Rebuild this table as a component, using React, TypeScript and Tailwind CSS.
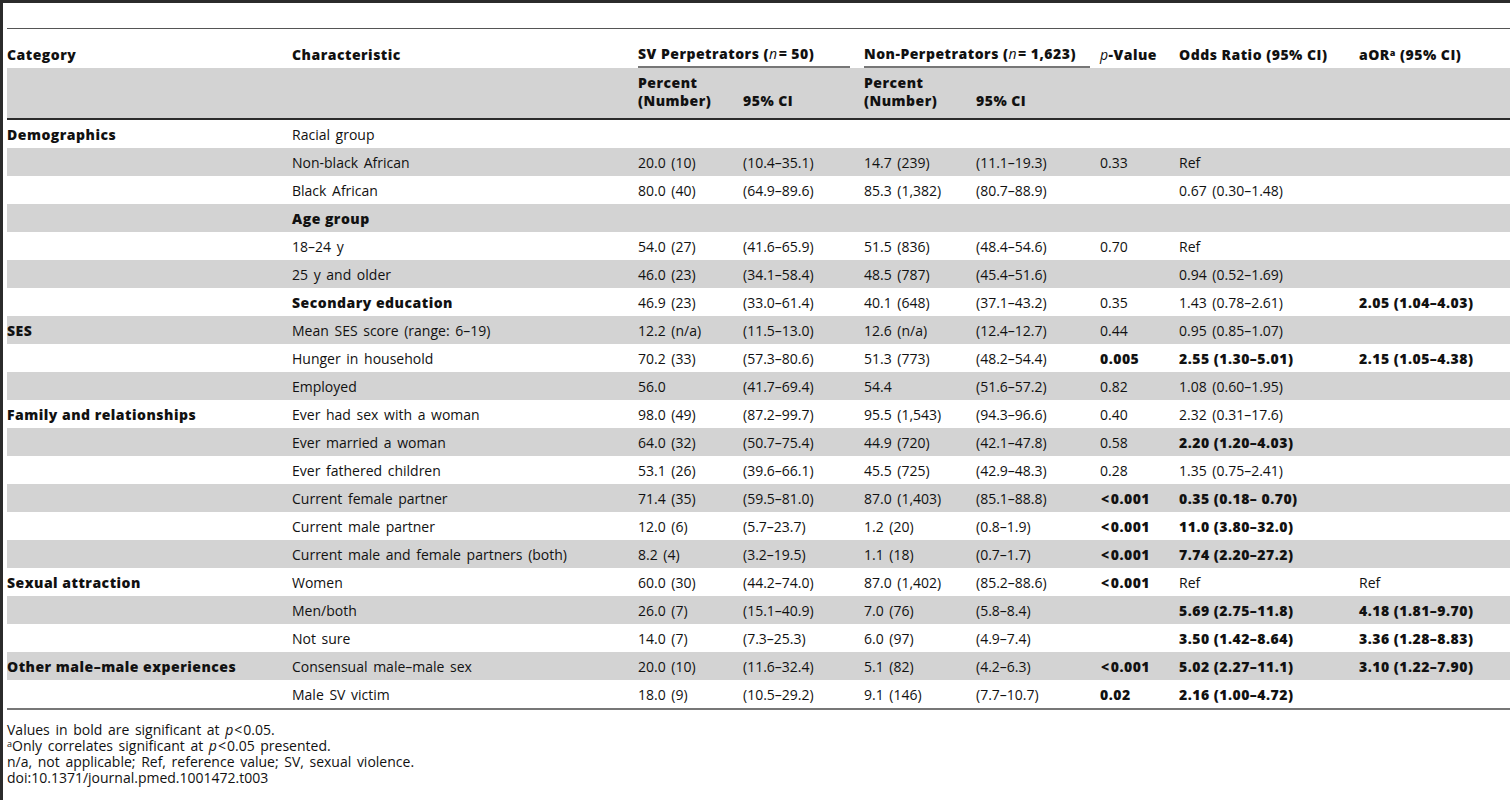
import React from 'react';

type Row = {
  cat?: string;
  ch: string;
  chBold?: boolean;
  svPct?: string;
  svCi?: string;
  npPct?: string;
  npCi?: string;
  p?: string;
  pBold?: boolean;
  or?: string;
  orBold?: boolean;
  aor?: string;
  aorBold?: boolean;
};

const rows: Row[] = [
  { cat: 'Demographics', ch: 'Racial group' },
  { ch: 'Non-black African', svPct: '20.0 (10)', svCi: '(10.4–35.1)', npPct: '14.7 (239)', npCi: '(11.1–19.3)', p: '0.33', or: 'Ref' },
  { ch: 'Black African', svPct: '80.0 (40)', svCi: '(64.9–89.6)', npPct: '85.3 (1,382)', npCi: '(80.7–88.9)', or: '0.67 (0.30–1.48)' },
  { ch: 'Age group', chBold: true },
  { ch: '18–24 y', svPct: '54.0 (27)', svCi: '(41.6–65.9)', npPct: '51.5 (836)', npCi: '(48.4–54.6)', p: '0.70', or: 'Ref' },
  { ch: '25 y and older', svPct: '46.0 (23)', svCi: '(34.1–58.4)', npPct: '48.5 (787)', npCi: '(45.4–51.6)', or: '0.94 (0.52–1.69)' },
  { ch: 'Secondary education', chBold: true, svPct: '46.9 (23)', svCi: '(33.0–61.4)', npPct: '40.1 (648)', npCi: '(37.1–43.2)', p: '0.35', or: '1.43 (0.78–2.61)', aor: '2.05 (1.04–4.03)', aorBold: true },
  { cat: 'SES', ch: 'Mean SES score (range: 6–19)', svPct: '12.2 (n/a)', svCi: '(11.5–13.0)', npPct: '12.6 (n/a)', npCi: '(12.4–12.7)', p: '0.44', or: '0.95 (0.85–1.07)' },
  { ch: 'Hunger in household', svPct: '70.2 (33)', svCi: '(57.3–80.6)', npPct: '51.3 (773)', npCi: '(48.2–54.4)', p: '0.005', pBold: true, or: '2.55 (1.30–5.01)', orBold: true, aor: '2.15 (1.05–4.38)', aorBold: true },
  { ch: 'Employed', svPct: '56.0', svCi: '(41.7–69.4)', npPct: '54.4', npCi: '(51.6–57.2)', p: '0.82', or: '1.08 (0.60–1.95)' },
  { cat: 'Family and relationships', ch: 'Ever had sex with a woman', svPct: '98.0 (49)', svCi: '(87.2–99.7)', npPct: '95.5 (1,543)', npCi: '(94.3–96.6)', p: '0.40', or: '2.32 (0.31–17.6)' },
  { ch: 'Ever married a woman', svPct: '64.0 (32)', svCi: '(50.7–75.4)', npPct: '44.9 (720)', npCi: '(42.1–47.8)', p: '0.58', or: '2.20 (1.20–4.03)', orBold: true },
  { ch: 'Ever fathered children', svPct: '53.1 (26)', svCi: '(39.6–66.1)', npPct: '45.5 (725)', npCi: '(42.9–48.3)', p: '0.28', or: '1.35 (0.75–2.41)' },
  { ch: 'Current female partner', svPct: '71.4 (35)', svCi: '(59.5–81.0)', npPct: '87.0 (1,403)', npCi: '(85.1–88.8)', p: '<0.001', pBold: true, or: '0.35 (0.18– 0.70)', orBold: true },
  { ch: 'Current male partner', svPct: '12.0 (6)', svCi: '(5.7–23.7)', npPct: '1.2 (20)', npCi: '(0.8–1.9)', p: '<0.001', pBold: true, or: '11.0 (3.80–32.0)', orBold: true },
  { ch: 'Current male and female partners (both)', svPct: '8.2 (4)', svCi: '(3.2–19.5)', npPct: '1.1 (18)', npCi: '(0.7–1.7)', p: '<0.001', pBold: true, or: '7.74 (2.20–27.2)', orBold: true },
  { cat: 'Sexual attraction', ch: 'Women', svPct: '60.0 (30)', svCi: '(44.2–74.0)', npPct: '87.0 (1,402)', npCi: '(85.2–88.6)', p: '<0.001', pBold: true, or: 'Ref', aor: 'Ref' },
  { ch: 'Men/both', svPct: '26.0 (7)', svCi: '(15.1–40.9)', npPct: '7.0 (76)', npCi: '(5.8–8.4)', or: '5.69 (2.75–11.8)', orBold: true, aor: '4.18 (1.81–9.70)', aorBold: true },
  { ch: 'Not sure', svPct: '14.0 (7)', svCi: '(7.3–25.3)', npPct: '6.0 (97)', npCi: '(4.9–7.4)', or: '3.50 (1.42–8.64)', orBold: true, aor: '3.36 (1.28–8.83)', aorBold: true },
  { cat: 'Other male–male experiences', ch: 'Consensual male–male sex', svPct: '20.0 (10)', svCi: '(11.6–32.4)', npPct: '5.1 (82)', npCi: '(4.2–6.3)', p: '<0.001', pBold: true, or: '5.02 (2.27–11.1)', orBold: true, aor: '3.10 (1.22–7.90)', aorBold: true },
  { ch: 'Male SV victim', svPct: '18.0 (9)', svCi: '(10.5–29.2)', npPct: '9.1 (146)', npCi: '(7.7–10.7)', p: '0.02', pBold: true, or: '2.16 (1.00–4.72)', orBold: true },
];

const cols = 'grid grid-cols-[285px_346px_105px_121px_112px_124px_79px_180px_151px]';
const bold = 'font-extrabold tracking-[0.035em] [word-spacing:0px]';

// wider "<" like the typeset original
const Lt: React.FC = () => <span className="mx-[1px]">&lt;</span>;

const withLt = (s?: string) =>
  s && s.startsWith('<') ? (
    <>
      <Lt />
      {s.slice(1)}
    </>
  ) : (
    s
  );

const App: React.FC = () => {
  return (
    <div
      className="min-h-[800px] w-[1510px] border-l-[3px] border-t-[3px] border-[#2b2b2b] bg-white pl-[4px] text-[14px] text-[#111] [word-spacing:2px]"
      style={{ fontFamily: '"Open Sans", "Noto Sans", Arial, sans-serif' }}
    >
      {/* blank title band */}
      <div className="h-[26px] border-b border-[#555]" />

      {/* header row */}
      <div className={`${cols} h-[39px] items-end ${bold}`}>
        <div className="pb-[3px]">Category</div>
        <div className="pb-[3px]">Characteristic</div>
        <div className="col-span-2 mr-[14px] h-full flex items-end border-b-2 border-[#777] pb-[2px]">
          <span>
            SV Perpetrators (<i className="font-normal">n</i>
            <span className="ml-[1px] mr-[4px]">=</span>50)
          </span>
        </div>
        <div className="col-span-2 mr-[10px] h-full flex items-end border-b-2 border-[#777] pb-[2px]">
          <span>
            Non-Perpetrators (<i className="font-normal">n</i>
            <span className="ml-[1px] mr-[4px]">=</span>1,623)
          </span>
        </div>
        <div className="pb-[3px]">
          <i className="font-normal">p</i>-Value
        </div>
        <div className="pb-[3px]">Odds Ratio (95% CI)</div>
        <div className="pb-[3px]">
          aOR<sup className="text-[9px]">a</sup> (95% CI)
        </div>
      </div>

      {/* sub header */}
      <div className={`${cols} h-[52px] items-end bg-[#d3d3d3] pb-[8px] ${bold} leading-[18px] border-b-2 border-[#2b2b2b]`}>
        <div />
        <div />
        <div>
          Percent
          <br />
          (Number)
        </div>
        <div>95% CI</div>
        <div>
          Percent
          <br />
          (Number)
        </div>
        <div>95% CI</div>
        <div />
        <div />
        <div />
      </div>

      {/* body */}
      <div className="border-b-2 border-[#777]">
        {rows.map((r, i) => (
          <div
            key={i}
            className={`${cols} h-[28px] items-center pt-[2px] leading-[26px] ${i % 2 === 1 ? 'bg-[#d3d3d3]' : ''}`}
          >
            <div className={bold}>{r.cat}</div>
            <div className={r.chBold ? bold : ''}>{r.ch}</div>
            <div>{r.svPct}</div>
            <div>{r.svCi}</div>
            <div>{r.npPct}</div>
            <div>{r.npCi}</div>
            <div className={r.pBold ? bold : ''}>{withLt(r.p)}</div>
            <div className={r.orBold ? bold : ''}>{r.or}</div>
            <div className={r.aorBold ? bold : ''}>{r.aor}</div>
          </div>
        ))}
      </div>

      {/* footnotes */}
      <div className="pt-[12px] text-[14px] leading-[16px]">
        <p>
          Values in bold are significant at <i>p</i>
          <Lt />
          0.05.
        </p>
        <p>
          <sup className="text-[9px]">a</sup>Only correlates significant at <i>p</i>
          <Lt />
          0.05 presented.
        </p>
        <p>n/a, not applicable; Ref, reference value; SV, sexual violence.</p>
        <p>doi:10.1371/journal.pmed.1001472.t003</p>
      </div>
    </div>
  );
};

export default App;
